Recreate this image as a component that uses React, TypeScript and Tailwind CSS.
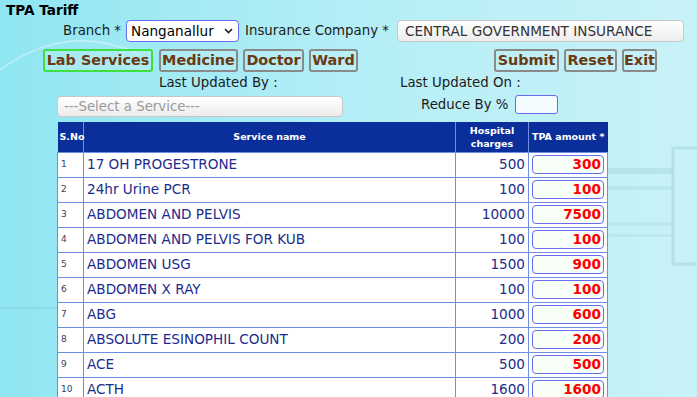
import React from 'react';

const rows = [
  { sno: 1, name: '17 OH PROGESTRONE', charge: 500, tpa: 300 },
  { sno: 2, name: '24hr Urine PCR', charge: 100, tpa: 100 },
  { sno: 3, name: 'ABDOMEN AND PELVIS', charge: 10000, tpa: 7500 },
  { sno: 4, name: 'ABDOMEN AND PELVIS FOR KUB', charge: 100, tpa: 100 },
  { sno: 5, name: 'ABDOMEN USG', charge: 1500, tpa: 900 },
  { sno: 6, name: 'ABDOMEN X RAY', charge: 100, tpa: 100 },
  { sno: 7, name: 'ABG', charge: 1000, tpa: 600 },
  { sno: 8, name: 'ABSOLUTE ESINOPHIL COUNT', charge: 200, tpa: 200 },
  { sno: 9, name: 'ACE', charge: 500, tpa: 500 },
  { sno: 10, name: 'ACTH', charge: 1600, tpa: 1600 },
];

function TabButton({ label, width, active }: { label: string; width: string; active?: boolean }) {
  return (
    <button
      className={`${width} h-[23px] rounded-[3px] border-2 ${active ? 'border-[#3ee03e]' : 'border-[#8a8a8a]'} bg-[#c4f0f6]/40 text-[14.4px] font-bold leading-none text-[#6b3a12] flex items-center justify-center`}
    >
      {label}
    </button>
  );
}

export default function App() {
  return (
    <div
      className="relative w-[697px] h-[397px] overflow-hidden bg-gradient-to-r from-[#8fe6f2] via-[#b4eef6] to-[#c8f2f8] text-[13.33px] text-[#1b1b1b]"
      style={{ fontFamily: '"DejaVu Sans", Verdana, sans-serif' }}
    >
      {/* faint background art */}
      <svg className="absolute left-0 top-0 pointer-events-none" width="697" height="397">
        <path d="M0 70 C 40 40, 90 30, 140 55" stroke="#ffffff" strokeOpacity="0.35" fill="none" strokeWidth="2" />
        <path d="M0 308 L 60 308" stroke="#7fb8c4" strokeOpacity="0.5" strokeWidth="1" />
        <rect x="673" y="148" width="40" height="116" fill="none" stroke="#a9d6de" strokeWidth="3" strokeOpacity="0.6" />
        <rect x="607" y="168" width="66" height="6" fill="#a9d6de" fillOpacity="0.5" />
        <rect x="607" y="186" width="66" height="4" fill="#a9d6de" fillOpacity="0.4" />
        <rect x="607" y="222" width="66" height="4" fill="#a9d6de" fillOpacity="0.4" />
        <rect x="607" y="234" width="66" height="3" fill="#a9d6de" fillOpacity="0.35" />
      </svg>

      <div className="relative">
        <div className="h-[20px] pl-[6px] text-[13.6px] font-bold leading-[20px] text-black">TPA Tariff</div>

        <div className="flex h-[22px] items-center">
          <div className="w-[122px] pr-[1px] text-right">Branch *</div>
          <div className="ml-[4px] flex h-[22px] w-[113px] items-center justify-between rounded-[4px] border-[1.5px] border-[#6a6af0] bg-white pl-[4px] pr-[5px] text-[13.6px] text-black">
            <span>Nanganallur</span>
            <svg width="9" height="6" viewBox="0 0 9 6">
              <path d="M1 1 L4.5 4.5 L8 1" stroke="#222" strokeWidth="1.6" fill="none" />
            </svg>
          </div>
          <div className="ml-[6px] w-[148px] whitespace-nowrap">Insurance Company *</div>
          <div className="ml-[4px] flex h-[22px] w-[287px] items-center rounded-[4px] border border-[#c8c8c8] bg-gradient-to-b from-white to-[#ededed] pl-[7px] text-[13.6px] text-[#333]">
            CENTRAL GOVERNMENT INSURANCE
          </div>
        </div>

        <div className="mt-[7px] flex h-[23px] items-center pl-[43px]">
          <TabButton label="Lab Services" width="w-[110px]" active />
          <div className="ml-[6px]"><TabButton label="Medicine" width="w-[79px]" /></div>
          <div className="ml-[5px]"><TabButton label="Doctor" width="w-[61px]" /></div>
          <div className="ml-[5px]"><TabButton label="Ward" width="w-[49px]" /></div>
          <div className="ml-[136px]"><TabButton label="Submit" width="w-[65px]" /></div>
          <div className="ml-[5px]"><TabButton label="Reset" width="w-[53px]" /></div>
          <div className="ml-[5px]"><TabButton label="Exit" width="w-[35px]" /></div>
        </div>

        <div className="mt-[2px] flex h-[18px] items-center">
          <div className="ml-[159px] w-[241px]">Last Updated By :</div>
          <div>Last Updated On :</div>
        </div>

        <div className="mt-[3px] flex h-[22px] items-start">
          <div className="ml-[57px] mt-[1px] flex h-[21px] w-[286px] items-center rounded-[4px] border border-[#c8c8c8] bg-gradient-to-b from-white to-[#ececec] pl-[6px] text-[#9a9a9a]">
            ---Select a Service---
          </div>
          <div className="ml-[78px] flex h-[19px] items-center">Reduce By %</div>
          <div className="ml-[7px] h-[19px] w-[43px] rounded-[3px] border-[1.5px] border-[#6a6af0] bg-[#f3fbff]" />
        </div>

        <table className="ml-[57px] mt-[5px] w-[550px] table-fixed border-collapse">
          <colgroup>
            <col className="w-[26px]" />
            <col className="w-[372px]" />
            <col className="w-[73px]" />
            <col className="w-[79px]" />
          </colgroup>
          <thead>
            <tr className="h-[30px] bg-[#0a2f9a] text-[9.5px] font-bold leading-[13px] text-white">
              <th className="border-r border-[#6d8fe2] pl-[2px] text-left">S.No</th>
              <th className="border-r border-[#6d8fe2] text-center">Service name</th>
              <th className="border-r border-[#6d8fe2] text-center">Hospital<br />charges</th>
              <th className="text-center">TPA amount *</th>
            </tr>
          </thead>
          <tbody>
            {rows.map((r) => (
              <tr key={r.sno} className="h-[25px] bg-white">
                <td className="border border-[#6d8fe2] pl-[3px] text-[9px] text-[#33415f]">{r.sno}</td>
                <td className="border border-[#6d8fe2] pl-[3px] text-[13.6px] text-[#1c2c8c] whitespace-nowrap">{r.name}</td>
                <td className="border border-[#6d8fe2] pr-[3px] text-right text-[13.6px] text-[#1c2c8c]">{r.charge}</td>
                <td className="border border-[#6d8fe2] px-[3px]">
                  <div className="flex h-[19px] items-center justify-end rounded-[4px] border-[1.5px] border-[#6a6af0] bg-[#f7fff7] pr-[2px] text-[13.6px] font-bold text-[#ff0000]">
                    {r.tpa}
                  </div>
                </td>
              </tr>
            ))}
          </tbody>
        </table>
      </div>
    </div>
  );
}
